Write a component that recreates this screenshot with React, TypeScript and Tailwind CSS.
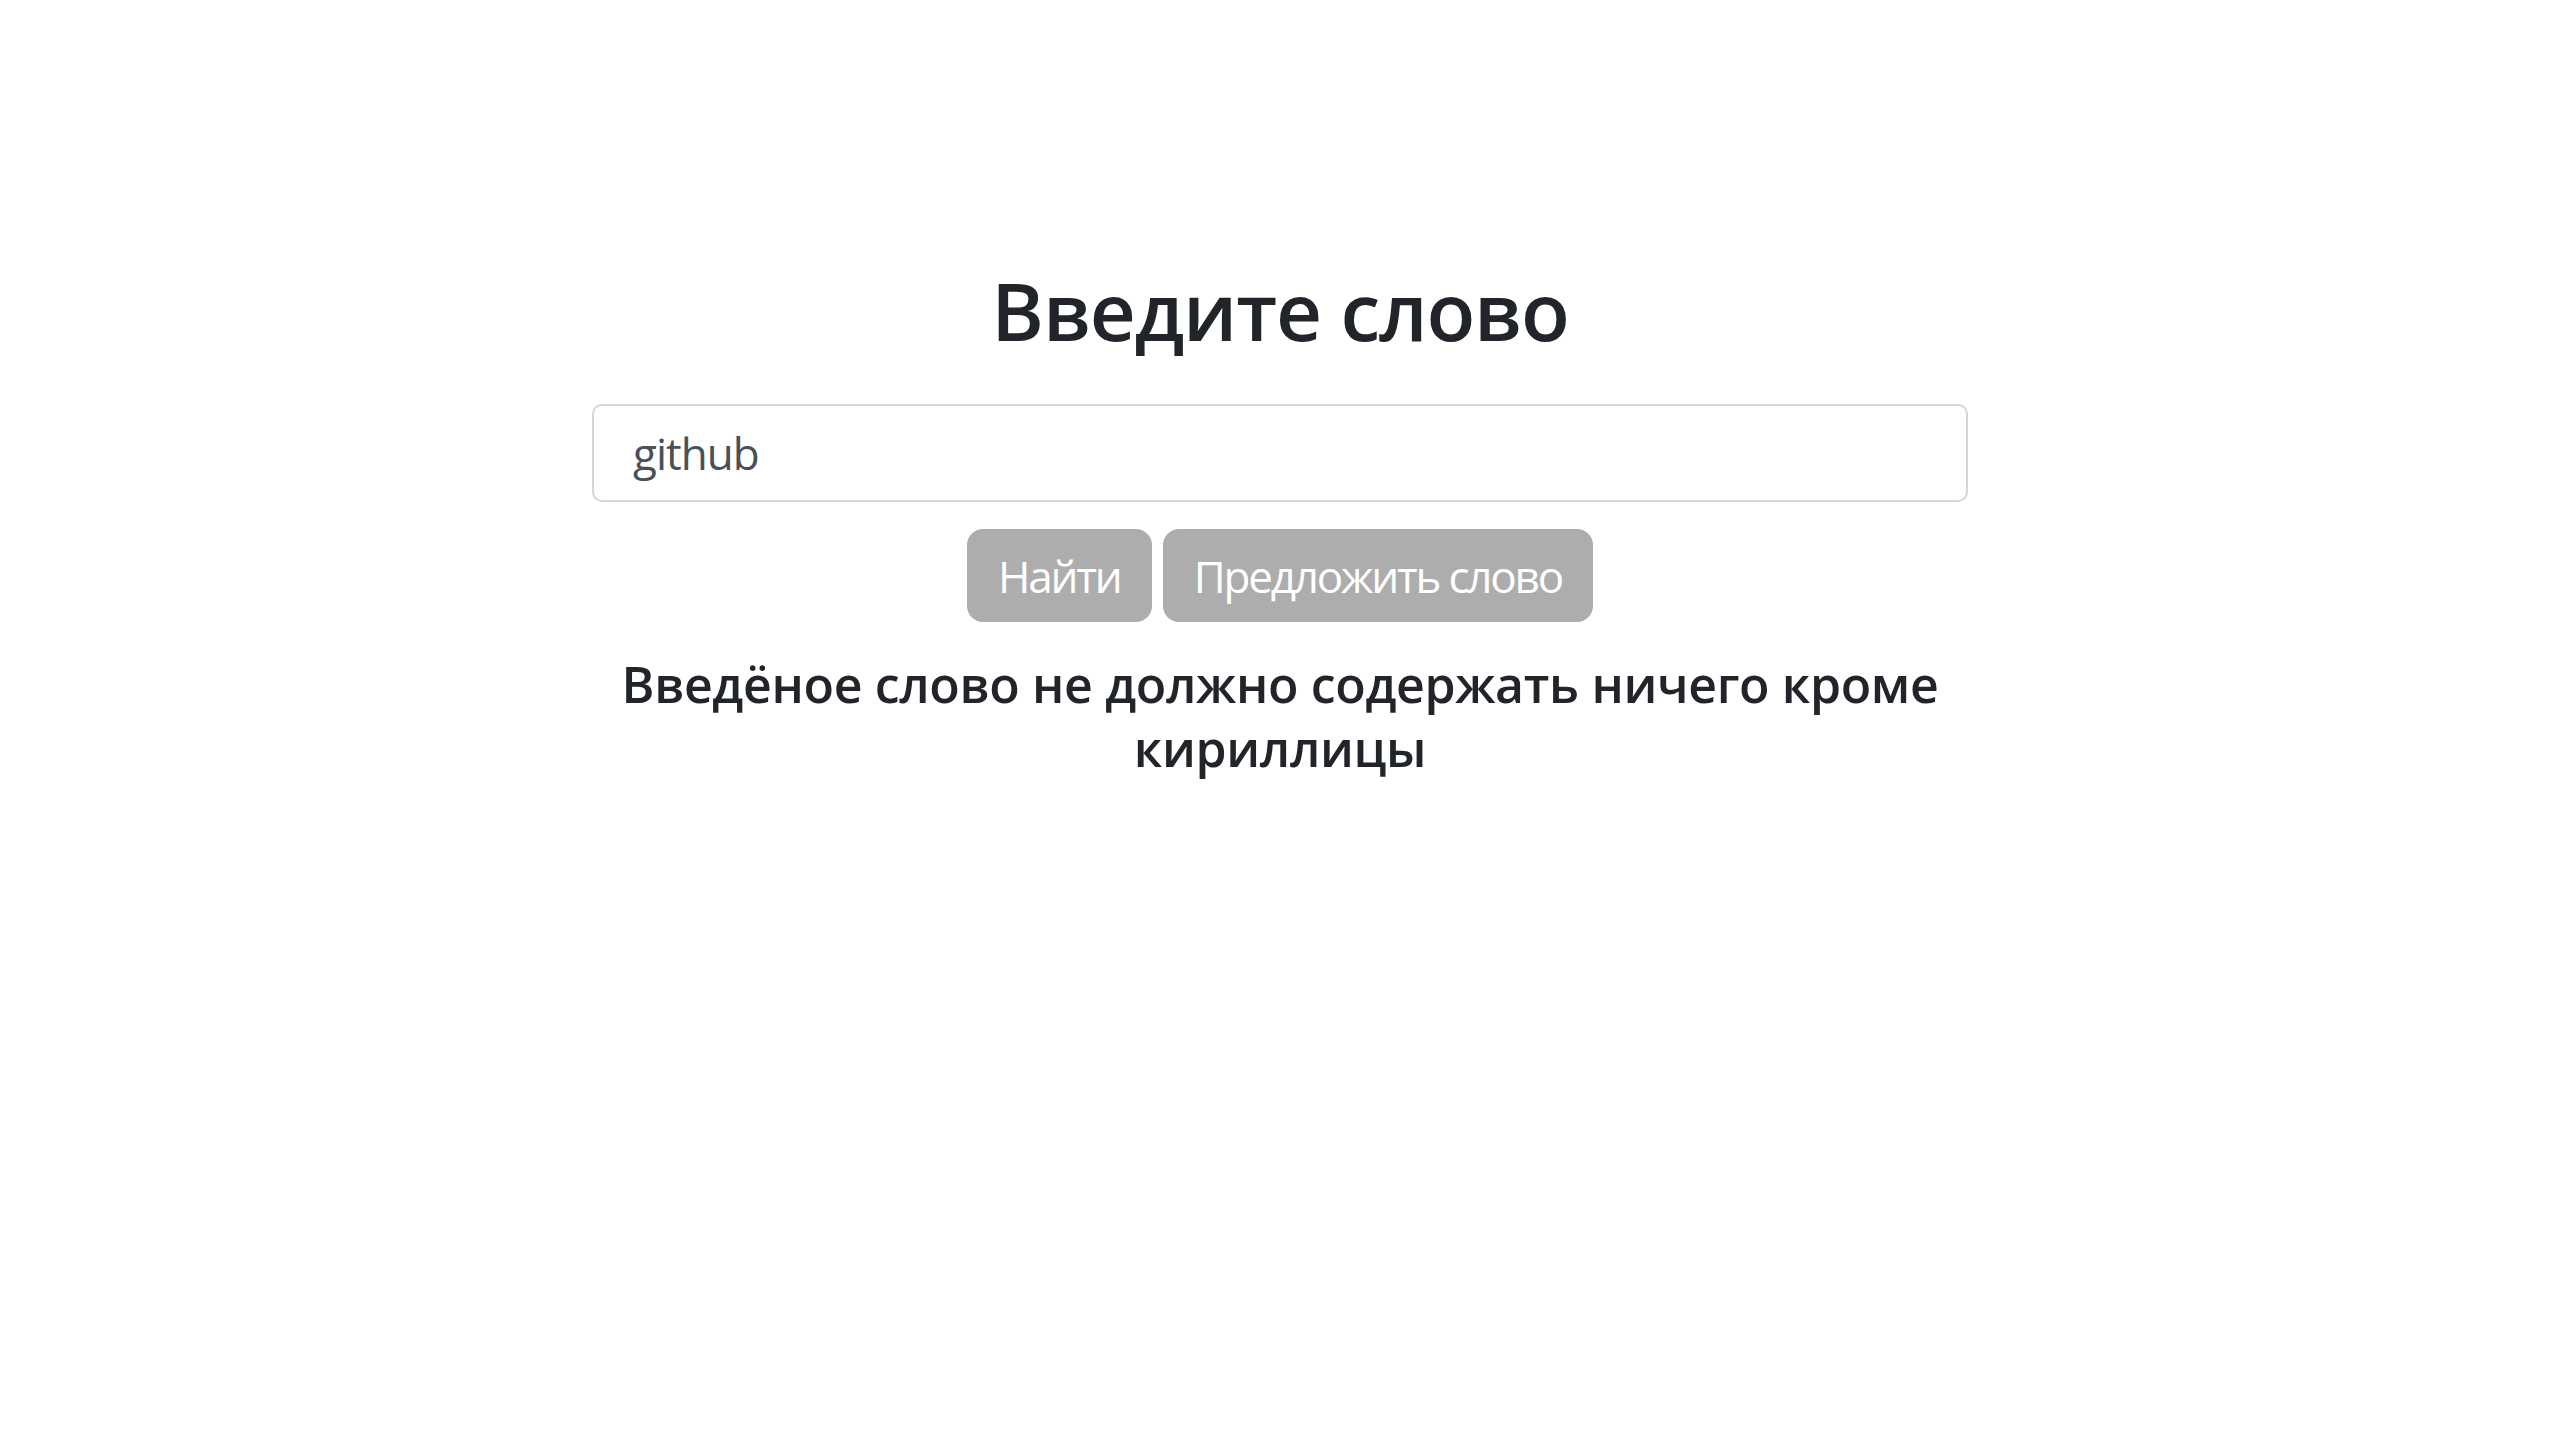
import { useState } from 'react'

export default function App() {
  const [word, setWord] = useState('github')

  return (
    <div className="min-h-screen w-full bg-white font-['Open_Sans','Noto_Sans',sans-serif] text-[#212529]">
      <div className="mx-auto flex w-[1376px] flex-col items-center pt-[262px]">
        <h1 className="text-[80px] leading-[96px] font-semibold tracking-[-1.2px]">Введите слово</h1>

        <input
          value={word}
          onChange={(e) => setWord(e.target.value)}
          className="mt-[46px] h-[98px] w-full rounded-[10px] border-2 border-[#d4d6d9] bg-white px-[39px] text-[44px] tracking-[-1px] text-[#495057] outline-none"
        />

        <div className="mt-[27px] flex gap-[11px]">
          <button className="h-[93px] rounded-[16px] bg-[#adadad] px-[31px] text-[44px] tracking-[-2.2px] text-white">
            Найти
          </button>
          <button className="h-[93px] rounded-[16px] bg-[#adadad] px-[31px] text-[44px] tracking-[-2.2px] text-white">
            Предложить слово
          </button>
        </div>

        <h4 className="mt-[30px] text-center text-[50px] leading-[64px] font-semibold tracking-[-0.35px]">
          Введёное слово не должно содержать ничего кроме кириллицы
        </h4>
      </div>
    </div>
  )
}
